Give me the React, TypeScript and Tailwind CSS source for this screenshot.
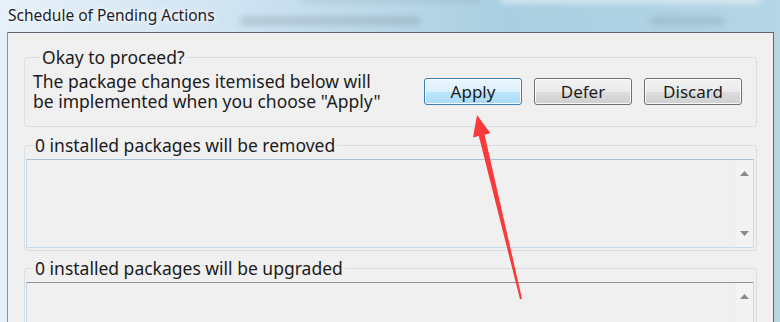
import React from 'react';

const FONT = { fontFamily: '"Noto Sans", "Open Sans", "Liberation Sans", sans-serif' };

const WinButton: React.FC<{ label: string; primary?: boolean }> = ({ label, primary }) => (
    <button
        className={`w-[98px] h-[27px] rounded-[3px] border text-[17px] leading-none text-[#1b1b1b] shadow-[inset_0_0_0_1px_rgba(255,255,255,0.85)] ${
            primary
                ? 'border-[#3c7fb1] bg-[linear-gradient(#eaf6fd_0%,#d9f0fc_50%,#bee6fd_51%,#a7d9f5_100%)]'
                : 'border-[#707070] bg-[linear-gradient(#f2f2f2_0%,#ebebeb_50%,#dddddd_51%,#cfcfcf_100%)]'
        }`}
    >
        {label}
    </button>
);

const GroupLabel: React.FC<{ children: React.ReactNode }> = ({ children }) => (
    <div className="-mt-[11px] ml-[7px] px-[2px] w-fit bg-[#f0f0f0] text-[17.5px] leading-[20px]">{children}</div>
);

const ListBox: React.FC<{ topBorder: string }> = ({ topBorder }) => (
    <div className={`mt-[4px] h-[89px] flex justify-end border border-[#c9dbe8] bg-[#f0f0f0] ${topBorder}`}>
        <div className="w-[19px] shrink-0 bg-[#f3f3f3] border-l border-[#e9e9e9] flex flex-col items-center justify-between py-[11px]">
            <svg width="9" height="5" viewBox="0 0 9 5">
                <path d="M4.5 0 L9 5 L0 5 Z" fill="#8a8a8a" />
            </svg>
            <svg width="9" height="5" viewBox="0 0 9 5">
                <path d="M0 0 L9 0 L4.5 5 Z" fill="#8a8a8a" />
            </svg>
        </div>
    </div>
);

export default function App() {
    return (
        <div
            className="relative w-[780px] h-[322px] overflow-hidden bg-[linear-gradient(90deg,#e6f0f9_0%,#cfe3f2_30%,#a9cfe1_65%,#b4d6e6_100%)] flex flex-col"
            style={FONT}
        >
            {/* blurred stuff behind the aero glass */}
            <div className="absolute left-[240px] top-[17px] w-[180px] h-[8px] rounded-full bg-[#6f818c]/30 blur-[3px]" />
            <div className="absolute left-[650px] top-[17px] w-[75px] h-[8px] rounded-full bg-[#6f818c]/25 blur-[3px]" />
            <div className="absolute left-[300px] top-[-4px] w-[180px] h-[6px] rounded-full bg-[#7d8f9a]/25 blur-[3px]" />
            <div className="absolute left-[500px] top-[-3px] w-[260px] h-[6px] rounded-full bg-[#ffffff]/60 blur-[3px]" />

            {/* Title bar */}
            <div className="relative h-[32px] shrink-0 pl-[8px] flex items-center">
                <span className="text-[15.5px] text-[#1c1c2c] [text-shadow:0_0_8px_#ffffff,0_0_4px_#ffffff]">
                    Schedule of Pending Actions
                </span>
            </div>

            {/* Client area */}
            <div className="flex flex-1 min-h-0">
                <div className="ml-[7px] w-[767px] border-t border-l border-r border-t-[#5d6670] border-l-[#8b949c] border-r-[#5d6670] bg-[#f0f0f0] px-[16px] pt-[24px] flex flex-col text-[#1b1b1b]">
                    {/* Okay to proceed? */}
                    <div className="border border-[#d5dfe5] rounded-[3px] pl-[8px] pr-[14px] pb-[15px]">
                        <GroupLabel>Okay to proceed?</GroupLabel>
                        <div className="flex items-center mt-[4px]">
                            <div className="text-[17.5px]">
                                <div className="h-[20px] leading-[20px]">The package changes itemised below will</div>
                                <div className="h-[20px] leading-[20px]">be implemented when you choose "Apply"</div>
                            </div>
                            <div className="ml-auto flex gap-[12px]">
                                <WinButton label="Apply" primary />
                                <WinButton label="Defer" />
                                <WinButton label="Discard" />
                            </div>
                        </div>
                    </div>

                    {/* Removed */}
                    <div className="mt-[18px] border border-[#d5dfe5] rounded-[3px] pl-[1px] pr-[2px] pb-[2px]">
                        <GroupLabel>0 installed packages will be removed</GroupLabel>
                        <ListBox topBorder="border-t-[#a7c4dc]" />
                    </div>

                    {/* Upgraded */}
                    <div className="mt-[17px] border border-[#d5dfe5] rounded-[3px] pl-[1px] pr-[2px] pb-[2px]">
                        <GroupLabel>0 installed packages will be upgraded</GroupLabel>
                        <ListBox topBorder="border-t-[#8f959c]" />
                    </div>
                </div>
                <div className="flex-1 border-l border-[#c3d3dc]" />
            </div>

            {/* Red annotation arrow */}
            <svg className="absolute left-0 top-0 pointer-events-none" width="780" height="322" viewBox="0 0 780 322">
                <polygon
                    points="477,115 490.4,133.3 484.6,134.7 522,298.8 520,299.2 478.8,136.1 473,137.5"
                    fill="#f83a3a"
                />
            </svg>
        </div>
    );
}
